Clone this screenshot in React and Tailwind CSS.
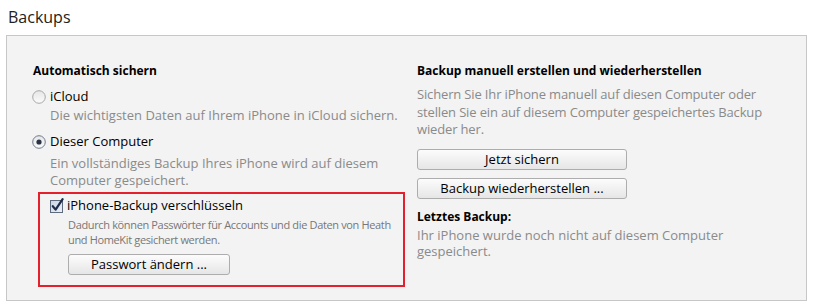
import React from "react";

const font = { fontFamily: '"Open Sans", "Noto Sans", sans-serif' };

function Radio({ checked }) {
  const id = checked ? "rg1" : "rg0";
  return (
    <svg width="14" height="14" viewBox="0 0 14 14" className="shrink-0">
      <defs>
        <linearGradient id={id} x1="0" y1="0" x2="0" y2="1">
          <stop offset="0" stopColor="#e6e6e6" />
          <stop offset="1" stopColor="#fbfbfb" />
        </linearGradient>
      </defs>
      <circle cx="7" cy="7" r="6.3" fill={`url(#${id})`} stroke={checked ? "#6f7c8e" : "#a8a8a8"} strokeWidth="1" />
      {checked && <circle cx="7" cy="7" r="2.6" fill="#2b3446" />}
    </svg>
  );
}

function Checkbox() {
  return (
    <svg width="15" height="15" viewBox="0 0 15 15" className="shrink-0">
      <defs>
        <linearGradient id="cbg" x1="0" y1="0" x2="1" y2="1">
          <stop offset="0" stopColor="#c9d3e2" />
          <stop offset="1" stopColor="#eef2f7" />
        </linearGradient>
      </defs>
      <rect x="0.5" y="2.5" width="12" height="12" fill="url(#cbg)" stroke="#5e6b7e" strokeWidth="1" />
      <path d="M2.8 8.2 L5.6 11.6 L12.6 1.2" fill="none" stroke="#1f2d4a" strokeWidth="2.2" strokeLinejoin="round" strokeLinecap="round" />
    </svg>
  );
}

function Btn({ children, className = "" }) {
  return (
    <div
      className={`flex items-center justify-center h-[21px] border border-[#adadad] rounded-[3px] bg-gradient-to-b from-[#fcfcfc] to-[#e6e6e6] text-[13px] text-black leading-none shrink-0 ${className}`}
    >
      {children}
    </div>
  );
}

export default function App() {
  return (
    <div className="w-[813px] h-[307px] bg-white overflow-hidden" style={font}>
      <div className="pl-[8px] pt-[7px] h-[35px] text-[16px] leading-[20px] text-[#222]">Backups</div>
      <div className="mx-[6px] h-[266px] border border-[#c7c7c7] bg-[#f3f3f3] flex pt-[26px]">
        <div className="w-[372px] shrink-0 pl-[25px] flex flex-col whitespace-nowrap">
          <div className="ml-[1px] font-bold text-[12px] leading-[17px] text-black">Automatisch sichern</div>
          <div className="mt-[9px] flex items-center gap-[4px] text-[13px] leading-[17px] text-black">
            <Radio />
            <span>iCloud</span>
          </div>
          <div className="mt-[2px] pl-[18px] text-[13px] leading-[17px] text-[#8a8a8a]">
            Die wichtigsten Daten auf Ihrem iPhone in iCloud sichern.
          </div>
          <div className="mt-[9px] flex items-center gap-[4px] text-[13px] leading-[17px] text-black">
            <Radio checked />
            <span>Dieser Computer</span>
          </div>
          <div className="mt-[5px] pl-[18px] text-[13px] leading-[17px] text-[#8a8a8a]">
            Ein vollständiges Backup Ihres iPhone wird auf diesem
            <br />
            Computer gespeichert.
          </div>
          <div className="mt-[3px] ml-[6px] w-[367px] h-[95px] border-2 border-[#e3202b] pl-[10px] pt-[3px] flex flex-col">
            <div className="flex items-center gap-[2px] text-[13px] leading-[17px] text-black">
              <Checkbox />
              <span>iPhone-Backup verschlüsseln</span>
            </div>
            <div className="mt-[3px] pl-[18px] text-[11px] leading-[15px] text-[#777777] tracking-[-0.35px]">
              Dadurch können Passwörter für Accounts und die Daten von Heath
              <br />
              und HomeKit gesichert werden.
            </div>
            <Btn className="ml-[18px] mt-[7px] w-[162px]">Passwort ändern ...</Btn>
          </div>
        </div>
        <div className="pl-[38px] flex flex-col whitespace-nowrap">
          <div className="font-bold text-[12px] leading-[17px] text-black">Backup manuell erstellen und wiederherstellen</div>
          <div className="mt-[7px] text-[13px] leading-[17.5px] text-[#8a8a8a] tracking-[-0.15px]">
            Sichern Sie Ihr iPhone manuell auf diesen Computer oder
            <br />
            stellen Sie ein auf diesem Computer gespeichertes Backup
            <br />
            wieder her.
          </div>
          <Btn className="mt-[10px] w-[210px]">Jetzt sichern</Btn>
          <Btn className="mt-[8px] w-[210px]">Backup wiederherstellen ...</Btn>
          <div className="mt-[9px] font-bold text-[12px] leading-[17px] text-black">Letztes Backup:</div>
          <div className="mt-[2px] text-[13px] leading-[16.5px] text-[#8a8a8a]">
            Ihr iPhone wurde noch nicht auf diesem Computer
            <br />
            gespeichert.
          </div>
        </div>
      </div>
    </div>
  );
}
